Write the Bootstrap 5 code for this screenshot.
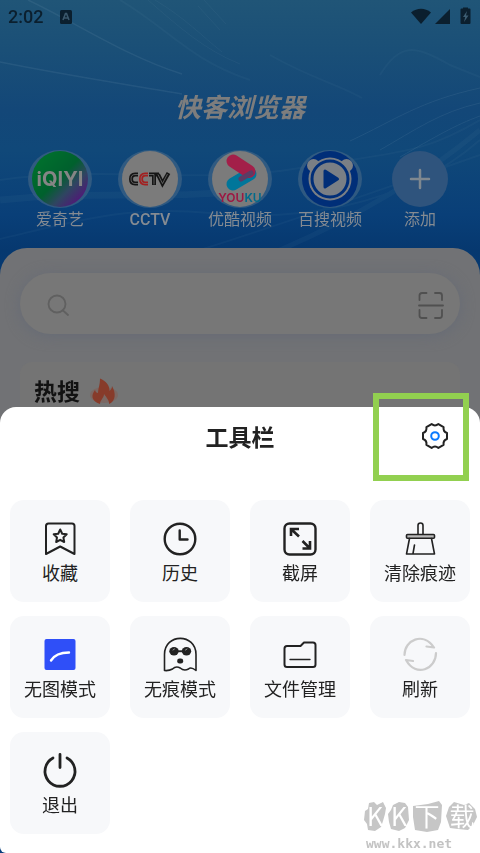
<!DOCTYPE html>
<html lang="zh-CN" class="h-100">
<head>
<meta charset="utf-8">
<meta name="viewport" content="width=device-width, initial-scale=1">
<title>快客浏览器</title>
<link href="https://cdn.jsdelivr.net/npm/bootstrap@5.3.0/dist/css/bootstrap.min.css" rel="stylesheet">
<style>
  body { font-family: Roboto, "Noto Sans CJK SC", sans-serif; background: #083e7c; color: #1c1c1e; }
  .home { background: linear-gradient(#205577 0, #1a4f77 50px, #134778 110px, #104879 150px, #093f78 215px, #06386f 250px, #003f86 100%); }
  .streaks { height: 250px; }
  .status { height: 34px; color: #0b1f2e; font-size: 18px; line-height: 34px; font-weight: 500; }
  .brand { font-size: 26px; line-height: 36px; font-weight: 700; font-style: italic; color: #7d7d7d; margin: 56px 0 24px; }
  .shortcuts { padding: 0 15px; }
  .shortcut { color: #858b92; font-size: 16px; line-height: 22px; font-weight: 500; }
  .shortcut:lang(zh) { font-weight: 400; }
  .shortcut .latin { font-weight: 500; }
  .shortcut svg { width: 64px; height: 58px; margin-bottom: 1px; }
  .feed { background: #717275; border-radius: 27px 27px 0 0; margin-top: 17px; padding: 25px 20px 0; }
  .search { background: #777; height: 61px; box-shadow: 0 2px 14px #666b76; padding: 3px 16px 0 27px; }
  .search input { color: #333; }
  .hot { background: #747474; border-radius: 12px; margin-top: 28px; padding: 14px; height: 110px; }
  .hot h2 { font-size: 23px; line-height: 34px; font-weight: 700; color: #121212; }
  .sheet { background: #fff; border-radius: 16px 16px 0 6px; padding-bottom: 19px; }
  .sheet-head { height: 60px; margin-bottom: 33px; }
  .sheet-head h1 { font-size: 23px; line-height: 34px; font-weight: 700; color: #222; padding-top: 3px; }
  .gear { right: 27px; top: 11px; }
  .callout { top: -14px; right: 11px; width: 96px; height: 88px; border: 6px solid #92d050; pointer-events: none; }
  .tools-wrap { padding: 0 10px; }
  .tools { --bs-gutter-x: 20px; --bs-gutter-y: 14px; }
  .tool { background: #f7f8fa; border-radius: 14px; padding: 20px 0 16px; font-size: 18px; line-height: 24px; color: #222; border: 0; }
  .tool svg { width: 36px; height: 36px; margin-bottom: 6px; }
  .line { fill: none; stroke: #222; stroke-width: 2; stroke-linecap: round; stroke-linejoin: round; }
  .stamp { right: 0; bottom: 0; width: 118px; height: 56px; }
</style>
<script src="https://cdn.jsdelivr.net/npm/bootstrap@5.3.0/dist/js/bootstrap.bundle.min.js"></script>
</head>
<body class="h-100 overflow-hidden">
<main class="home position-relative">
  <svg class="streaks position-absolute top-0 start-0 w-100" viewBox="0 0 480 250" preserveAspectRatio="none" fill="none" stroke="#7ea0b8" aria-hidden="true">
    <g opacity=".14">
      <path d="M28 0C75 22 125 56 182 74" stroke-width="1.4"/>
      <path d="M0 62C70 76 130 85 182 94" stroke-width="1.4"/>
      <path d="M148 0C180 28 205 50 240 64M155 0C185 18 202 36 222 52M198 6L220 30M204 0L226 24" opacity=".6"/>
      <path d="M350 141C395 120 420 101 480 88M380 150C415 130 440 112 480 103M400 157C435 137 455 125 480 116"/>
    </g>
    <g opacity=".06" stroke-width="2">
      <path d="M120 0C170 30 190 60 250 80M270 55C310 78 340 85 362 98M380 75C400 42 415 45 450 65L480 77"/>
      <path d="M0 180C100 165 200 185 300 168S420 155 480 120M0 239C80 220 130 205 210 213S400 210 480 140M200 250C310 215 380 190 480 155"/>
      <path d="M0 200C100 190 160 200 260 190" stroke-width="7"/>
      <path d="M280 250C350 220 420 180 480 130" stroke-width="5"/>
    </g>
  </svg>

  <header class="status position-relative d-flex align-items-center ps-2 pe-2">
    <span>2:02</span>
    <svg class="ms-3" width="14" height="14" viewBox="0 0 14 14" role="img" aria-label="输入法"><rect x="1" y="0" width="12" height="14" rx="1.500" fill="#0b1f2e"/><path d="M4 10L6.500 3.500H7.500L10 10M5 8H9" stroke="#3b586c" stroke-width="1.600" fill="none"/></svg>
    <svg class="ms-auto" width="62" height="20" viewBox="0 0 62 20" fill="#0b1f2e" role="img" aria-label="网络和电量">
      <path d="M1 5.500C7 .5 15 .5 21 5.500L11 17Z"/>
      <path d="M40 2V17H25Z"/>
      <path d="M53 1.500V.5H58V1.500H59.500Q60.500 1.500 60.500 2.500V16Q60.500 17 59.500 17H51.500Q50.500 17 50.500 16V2.500Q50.500 1.500 51.500 1.500Z"/>
      <path d="M57 4L53 10H55.200L54 15L58.500 8.500H56Z" fill="#3d5d72"/>
    </svg>
  </header>

  <div class="brand position-relative text-center">快客浏览器</div>

  <nav class="shortcuts position-relative d-flex" aria-label="快捷网站">
    <a class="shortcut d-flex flex-column align-items-center text-decoration-none flex-fill w-100" href="#">
      <svg viewBox="0 0 64 58" aria-hidden="true">
        <defs><linearGradient id="iq" x1=".15" y1=".15" x2=".9" y2=".9"><stop offset="0" stop-color="#006f2d"/><stop offset=".45" stop-color="#00602d"/><stop offset=".7" stop-color="#2f4561"/><stop offset="1" stop-color="#55127b"/></linearGradient></defs>
        <ellipse cx="32" cy="29" rx="32" ry="29" fill="#3c6284" opacity=".75"/><circle cx="32" cy="29" r="28" fill="url(#iq)"/>
        <text x="32" y="35.500" text-anchor="middle" font-family="Inter, sans-serif" font-weight="700" font-size="20" fill="#858585">iQIYI</text>
      </svg><span>爱奇艺</span></a>
    <a class="shortcut d-flex flex-column align-items-center text-decoration-none flex-fill w-100" href="#">
      <svg viewBox="0 0 64 58" aria-hidden="true">
        <ellipse cx="32" cy="29" rx="32" ry="29" fill="#3c6284" opacity=".75"/><circle cx="32" cy="29" r="28" fill="#7b7b7b"/>
        <g fill="none" stroke-width="4">
          <path d="M20 24.500H17Q13 24.500 13 29T17 33.500H20" stroke="#151515"/><path d="M20 24.500H17Q13 24.500 13 29T17 33.500H20" stroke="#777" stroke-width=".7"/>
          <path d="M30 24.500H27Q23 24.500 23 29T27 33.500H30" stroke="#a32020"/><path d="M30 24.500H27Q23 24.500 23 29T27 33.500H30" stroke="#777" stroke-width=".7"/>
          <path d="M31 24.500H41M36 24.500V35M40 24.500L44.500 33.500L50.500 23" stroke="#151515"/><path d="M31 24.500H36V34.500M40 24.500L44.500 33.500L49.500 24" stroke="#777" stroke-width=".7"/>
        </g>
      </svg><span class="latin">CCTV</span></a>
    <a class="shortcut d-flex flex-column align-items-center text-decoration-none flex-fill w-100" href="#">
      <svg viewBox="0 0 64 58" aria-hidden="true">
        <ellipse cx="32" cy="29" rx="32" ry="29" fill="#3c6284" opacity=".75"/><circle cx="32" cy="29" r="28" fill="#7b7b7b"/>
        <path d="M25 34L42 24" stroke="#00769a" stroke-width="13" stroke-linecap="round"/>
        <path d="M25 11L41 21.500" stroke="#a31f49" stroke-width="13" stroke-linecap="round"/>
        <path d="M33 29L43 23" stroke="#5b3c65" stroke-width="5" stroke-linecap="round"/>
        <text x="32" y="52" text-anchor="middle" font-family="Inter, sans-serif" font-weight="600" font-size="12" fill="#9d1742">YOU<tspan fill="#006b8c">KU</tspan></text>
      </svg><span>优酷视频</span></a>
    <a class="shortcut d-flex flex-column align-items-center text-decoration-none flex-fill w-100" href="#">
      <svg viewBox="0 0 64 58" aria-hidden="true">
        <ellipse cx="32" cy="29" rx="32" ry="29" fill="#3c6284" opacity=".75"/><circle cx="32" cy="29" r="28" fill="#002e78"/>
        <g fill="#7a7f85"><circle cx="15.500" cy="15.500" r="6.500"/><circle cx="48.500" cy="15.500" r="6.500"/><circle cx="32" cy="29" r="21.500"/></g>
        <circle cx="32" cy="29" r="18" fill="none" stroke="#002e78" stroke-width="3"/>
        <path d="M27 21V37L39.500 29Z" fill="#002e78" stroke="#002e78" stroke-width="3" stroke-linejoin="round"/>
      </svg><span>百搜视频</span></a>
    <a class="shortcut d-flex flex-column align-items-center text-decoration-none flex-fill w-100" href="#">
      <svg viewBox="0 0 64 58" aria-hidden="true"><circle cx="32" cy="29" r="28" fill="#2f547d"/><path d="M32 20V38M23 29H41" stroke="#7f8890" stroke-width="2.500" stroke-linecap="round"/></svg><span>添加</span></a>
  </nav>

  <section class="feed position-relative">
    <form class="search rounded-pill d-flex align-items-center">
      <label for="q" class="d-flex"><svg width="24" height="24" viewBox="0 0 24 24" fill="none" stroke="#606060" stroke-width="1.800" stroke-linecap="round" role="img" aria-label="搜索"><circle cx="10" cy="11" r="8.500"/><path d="M16 17.500L21 22"/></svg></label>
      <input id="q" type="text" class="form-control border-0 bg-transparent shadow-none">
      <button type="button" class="btn p-0 border-0 d-flex" aria-label="扫一扫"><svg width="26" height="28" viewBox="0 0 26 28" fill="none" stroke="#505050" stroke-width="1.800" stroke-linecap="round"><path d="M1.500 9V4.500Q1.500 2 4 2H8.500M17 2H21.500Q24 2 24 4.500V9M1.500 19V24.500Q1.500 27 4 27H8.500M17 27H21.500Q24 27 24 24.500V19M1 14.500H25"/></svg></button>
    </form>
    <div class="hot d-flex align-items-start">
      <h2 class="m-0">热搜</h2>
      <svg class="ms-2" width="30" height="34" viewBox="0 0 30 34" aria-hidden="true"><ellipse cx="16" cy="19" rx="14" ry="8" fill="#80625b" opacity=".65"/><path d="M12 28C3 25 3 19 7 14C7.500 16 8.500 17 10 17C10.500 11 12 9 12 2.500C18 5 21.500 9 21.500 15C23 14 24 12 24 10C28 17 28 25 21 28C21.500 25 19 22 16 18C16 22 12 24 12 28Z" fill="#873b2a"/></svg>
    </div>
  </section>
</main>

<section class="sheet fixed-bottom" aria-labelledby="tools-title">
  <header class="sheet-head position-relative d-flex align-items-center justify-content-center">
    <h1 id="tools-title" class="m-0">工具栏</h1>
    <button type="button" class="gear btn p-1 border-0 position-absolute d-flex" aria-label="设置">
      <svg width="28" height="28" viewBox="-14 -14 28 28" fill="none"><path class="line" d="M12 -3V3Q7.900 4.450 8.600 8.900L3.400 11.900Q0 9.100 -3.400 11.900L-8.600 8.900Q-7.900 4.450 -12 3V-3Q-7.900 -4.450 -8.600 -8.900L-3.400 -11.900Q0 -9.100 3.400 -11.900L8.600 -8.900Q7.900 -4.450 12 -3Z"/><circle r="3.800" stroke="#0a7aff" stroke-width="2"/></svg>
    </button>
    <div class="callout position-absolute"></div>
  </header>

  <div class="tools-wrap">
    <div class="tools row row-cols-4 mt-0">
      <div class="col mt-0"><button type="button" class="tool w-100 d-flex flex-column align-items-center">
        <svg viewBox="0 0 36 36" aria-hidden="true"><path class="line" d="M4 34V6Q4 3.500 6.500 3.500H30Q32.500 3.500 32.500 6V34L18.200 26.500Z"/><path class="line" d="M18.200 9.500L20.200 13.700L24.700 14.300L21.400 17.400L22.200 22L18.200 19.800L14.200 22L15 17.400L11.700 14.300L16.200 13.700Z"/></svg>收藏</button></div>
      <div class="col mt-0"><button type="button" class="tool w-100 d-flex flex-column align-items-center">
        <svg viewBox="0 0 36 36" aria-hidden="true"><circle class="line" cx="18" cy="19" r="15.300" style="stroke-width:2.400"/><path class="line" d="M17.700 10.500V19.500H25.500" style="stroke-width:2.400"/></svg>历史</button></div>
      <div class="col mt-0"><button type="button" class="tool w-100 d-flex flex-column align-items-center">
        <svg viewBox="0 0 36 36" aria-hidden="true"><rect class="line" x="2.500" y="3.500" width="31" height="31" rx="5" style="stroke-width:2.400"/><path class="line" d="M9 16V9H17M9.500 9.500L17 16.500M28 21V28.500H20.500M27.500 28L20.500 21" style="stroke-width:2.600;stroke-linecap:butt;stroke-linejoin:miter"/></svg>截屏</button></div>
      <div class="col mt-0"><button type="button" class="tool w-100 d-flex flex-column align-items-center">
        <svg viewBox="0 0 36 36" aria-hidden="true"><g class="line" style="stroke-width:1.600"><path d="M16 14.500V5.500Q16 3 18.500 3T21 5.500V14.500"/><rect x="4.500" y="14.500" width="28" height="3.800" rx="1" fill="#bbb"/><path d="M7.500 18.500L4.500 34H32.500L29.500 18.500M12.500 25L11 33.500"/></g></svg>清除痕迹</button></div>
      <div class="col"><button type="button" class="tool w-100 d-flex flex-column align-items-center">
        <svg viewBox="0 0 36 36" aria-hidden="true"><rect x="2.500" y="3" width="31" height="31" rx="2" fill="#2f4ff8"/><path d="M9 24.500C13 18 19 16.500 27 16.500" fill="none" stroke="#fff" stroke-width="2.400" stroke-linecap="round"/></svg>无图模式</button></div>
      <div class="col"><button type="button" class="tool w-100 d-flex flex-column align-items-center">
        <svg viewBox="0 0 36 36" aria-hidden="true"><path class="line" style="stroke-width:1.600" d="M2.500 34.500V18.500C2.500-3 34-3 34 18.500V34.500Q29 30.500 26.500 33Q22 35.500 18.200 32Q14 29.500 10.500 33Q7 35 2.500 34.500Z"/><g fill="#222"><ellipse cx="12" cy="15.300" rx="4.700" ry="4.200"/><ellipse cx="24.500" cy="15.300" rx="4.700" ry="4.200"/><path d="M15 14.300H22V16.200H15Z"/><rect x="15.200" y="22.500" width="6" height="5" rx="2.300"/></g><path d="M11 14L12.500 13M23.500 14L25 13" stroke="#999" stroke-linecap="round"/></svg>无痕模式</button></div>
      <div class="col"><button type="button" class="tool w-100 d-flex flex-column align-items-center">
        <svg viewBox="0 0 36 36" aria-hidden="true"><path class="line" d="M5 10H18.500L22 6.500H31Q33.500 6.500 33.500 9V28.500Q33.500 31 31 31H5Q2.500 31 2.500 28.500V12.500Q2.500 10 5 10Z"/><path class="line" d="M8 23.500H28" style="stroke-width:1.400"/></svg>文件管理</button></div>
      <div class="col"><button type="button" class="tool w-100 d-flex flex-column align-items-center">
        <svg viewBox="0 0 36 36" aria-hidden="true"><path d="M2.500 19C2.500 4 21-4.500 32 11.500L24.500 10.500M34 17C34 33 14 42 4 24L11 25" fill="none" stroke="#ccc" stroke-width="2.200" stroke-linecap="round" stroke-linejoin="round"/></svg>刷新</button></div>
      <div class="col"><button type="button" class="tool w-100 d-flex flex-column align-items-center">
        <svg viewBox="0 0 36 36" aria-hidden="true"><path class="line" style="stroke-width:2.800" d="M11 6A15 15 0 1 0 25 6M18 2.500V15.500"/></svg>退出</button></div>
    </div>
  </div>

  <svg class="stamp position-absolute" viewBox="0 0 118 56" role="img" aria-label="KK下载 www.kkx.net">
    <g fill="#c6c6c6">
      <path d="M7 6L12 5L15 8L21 5L24 11L23 17L21 24L19 30L13 34L6 33L5 27L2 23L3 14L6 12Z"/>
      <path d="M31 8L37 5L43 6L46 10L47 23L43 31L37 34L29 32L27 25L26 17L29 13Z"/>
      <path d="M51 9L66 7L77 4L80 8L79 25L76 33L65 35L53 33L51 20Z"/>
      <path d="M87 10L92 5L102 8L107 6L113 12L115 20L111 28L106 33L96 32L88 31L86 25L84 19Z"/>
    </g>
    <g fill="#fff" text-anchor="middle" font-family="'Noto Sans CJK SC', sans-serif" font-size="25"><text x="13" y="29">K</text><text x="37" y="29">K</text><text x="65" y="29">下</text><text x="100" y="29">载</text></g>
    <text x="4" y="51" font-family="'DejaVu Sans Mono', monospace" font-weight="700" font-size="13" fill="#c3c3c3">www.kkx.net</text>
  </svg>
</section>
</body>
</html>
